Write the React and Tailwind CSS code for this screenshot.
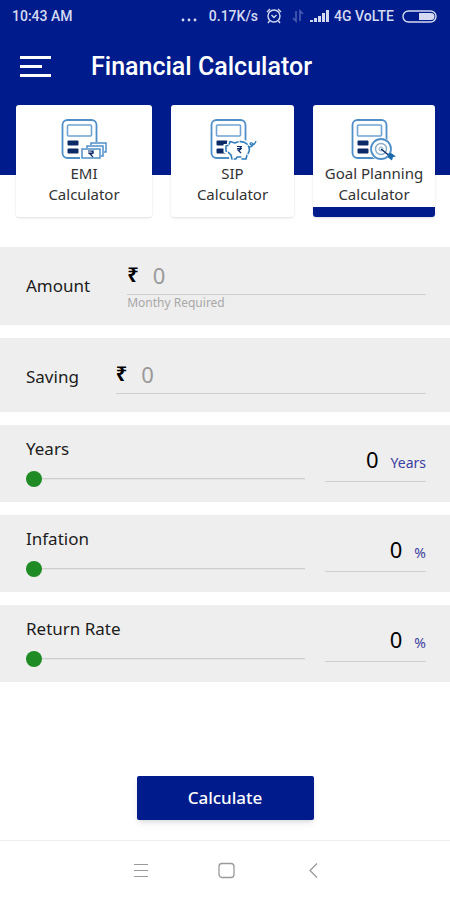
import { useState } from 'react';

const tabs = [
  { id: 'emi', title: 'EMI', Icon: EmiIcon, width: 'flex-[136]' },
  { id: 'sip', title: 'SIP', Icon: SipIcon, width: 'flex-[123]' },
  { id: 'goal', title: 'Goal Planning', Icon: GoalIcon, width: 'flex-[122]' },
];

const sliders = [
  { id: 'years', label: 'Years', unit: 'Years', max: 40 },
  { id: 'inflation', label: 'Infation', unit: '%', max: 30 },
  { id: 'return', label: 'Return Rate', unit: '%', max: 30 },
];

function CalculatorBody() {
  return (
    <>
      <rect x="2.5" y="3" width="34" height="38" rx="5" stroke="#4f8fc8" strokeWidth="1.8" />
      <rect x="7.5" y="8" width="24" height="11" rx="1" stroke="#6fa3d3" strokeWidth="1.6" />
      <rect x="7.5" y="23.5" width="11" height="5" rx="1" fill="#0b2a66" />
      <rect x="7.5" y="31.5" width="11" height="5" rx="1" fill="#0b2a66" />
    </>
  );
}

function EmiIcon() {
  return (
    <svg className="h-11 w-12" viewBox="0 0 48 44" fill="none" aria-hidden="true">
      <CalculatorBody />
      <path d="M20 30h6v-5h22v19H20z" fill="#fff" />
      <g stroke="#4f8fc8" strokeWidth="1.5">
        <path d="M31 28v-2h15v9h-2" />
        <path d="M27 31v-2h16v10h-2" />
        <rect x="22" y="32" width="18" height="9" />
      </g>
      <path d="M28 34h6M28 36h6M30 34c4 0 4 3 0 3l3 3" stroke="#0b2a66" strokeWidth="1.1" />
    </svg>
  );
}

function SipIcon() {
  return (
    <svg className="h-11 w-12" viewBox="0 0 48 44" fill="none" aria-hidden="true">
      <CalculatorBody />
      <path
        d="M21 24.500l5 1.500c4-2 9-2 12 1 3 3 3 8 0 11l-1 4h-4l-1-2h-4l-1 2h-4l-1-4-3-3-2-1v-5l3-1z"
        fill="#fff"
        stroke="#fff"
        strokeWidth="5"
      />
      <path
        d="M21 24.500l5 1.500c4-2 9-2 12 1 3 3 3 8 0 11l-1 4h-4l-1-2h-4l-1 2h-4l-1-4-3-3-2-1v-5l3-1z"
        stroke="#2f7dbb"
        strokeWidth="1.6"
        strokeLinejoin="round"
        strokeDasharray="9 1"
      />
      <path d="M40 30c4 0 5-3 3-4s-3 2 0 2 3-2 4-4" stroke="#2f7dbb" strokeWidth="1.3" />
      <path d="M28 29.500h5M28 31.500h5M29 29.500c4 0 4 3.500 0 3.500l3 3" stroke="#0b2a66" strokeWidth="1.2" />
    </svg>
  );
}

function GoalIcon() {
  return (
    <svg className="h-11 w-12" viewBox="0 0 48 44" fill="none" aria-hidden="true">
      <CalculatorBody />
      <circle cx="31" cy="32" r="11.500" fill="#fff" />
      <circle cx="31" cy="32" r="10" stroke="#4f8fc8" strokeWidth="1.8" />
      <circle cx="31" cy="32" r="5.500" stroke="#86abc9" strokeWidth="1.4" />
      <circle cx="31" cy="32" r="2" stroke="#86abc9" />
      <path d="M31 32l10 8" stroke="#0b2a66" strokeWidth="1.5" />
      <path d="M38 37l3-1 5 3.500-3 .5-1 3.500-4-3z" fill="#1769aa" />
    </svg>
  );
}

function StatusBar() {
  return (
    <div className="flex h-8 items-center justify-between px-3 font-['Roboto',sans-serif] text-sm font-medium text-[#d5daf3]">
      <span>10:43 AM</span>
      <div className="flex items-center gap-1">
        <svg className="mr-2 h-4 w-4" viewBox="0 0 16 16" fill="currentColor" aria-hidden="true">
          <circle cx="2" cy="12" r="1.4" />
          <circle cx="8" cy="12" r="1.4" />
          <circle cx="14" cy="12" r="1.4" />
        </svg>
        <span>0.17K/s</span>
        <svg className="ml-1 h-4 w-4" viewBox="0 0 16 16" fill="none" stroke="currentColor" strokeWidth="1.4" aria-hidden="true">
          <circle cx="8" cy="8" r="6" />
          <path d="M5.500 7L8 9.500 10.500 7M1 4l3-3M15 4l-3-3M3.500 13L2 15M12.500 13l1.500 2" />
        </svg>
        <svg className="ml-1 h-4 w-4" viewBox="0 0 16 16" fill="none" stroke="#4a5cb5" strokeWidth="1.6" aria-hidden="true">
          <path d="M6 3v10L3 10M10 13V3l3 3" />
        </svg>
        <svg className="h-4 w-5" viewBox="0 0 20 16" fill="currentColor" aria-hidden="true">
          <path d="M0 12h3v2H0zM4 10h3v4H4zM8 8h3v6H8zM12 5h3v9h-3zM16 2h3v12h-3z" />
        </svg>
        <span>4G VoLTE</span>
        <svg className="ml-1 h-4 w-9" viewBox="0 0 36 16" aria-hidden="true">
          <rect x="1" y="3" width="33" height="11" rx="5.500" fill="none" stroke="currentColor" strokeWidth="1.4" />
          <path d="M17 5h12a3.500 3.500 0 0 1 0 7H17z" fill="currentColor" />
        </svg>
      </div>
    </div>
  );
}

function AmountRow({ id, label, hint, value, onChange }) {
  return (
    <div className={`flex items-center bg-[#eeeeee] pr-6 pl-[26px] ${hint ? 'py-3.5' : 'pt-[22px] pb-[18px]'}`}>
      <label htmlFor={id} className="mr-[37px] text-[17px] leading-6">{label}</label>
      <div className="min-w-0 flex-1">
        <div className="flex h-[34px] items-start gap-3.5 border-b border-[#cfcfcf]">
          <span className="text-xl leading-7 font-bold text-black">₹</span>
          <input
            id={id}
            value={value}
            onChange={onChange}
            placeholder="0"
            inputMode="numeric"
            className="h-7 w-full min-w-0 bg-transparent text-[22px] leading-7 outline-none placeholder:text-[#999999]"
          />
        </div>
        {hint && <p className="text-xs leading-4 text-[#a8a8a8]">{hint}</p>}
      </div>
    </div>
  );
}

function SliderRow({ id, label, unit, max, value, onChange }) {
  return (
    <div className="flex h-[77px] gap-5 bg-[#eeeeee] pt-3 pr-6 pl-[26px]">
      <div className="min-w-0 flex-1">
        <label htmlFor={id} className="block text-[17px] leading-6">{label}</label>
        <input
          id={id}
          type="range"
          min="0"
          max={max}
          value={value}
          onChange={onChange}
          className="mt-2.5 block h-4 w-full appearance-none bg-linear-to-b from-transparent from-[44%] via-[#c4c4c4] via-[44%] to-transparent to-[56%] [&::-webkit-slider-thumb]:size-4 [&::-webkit-slider-thumb]:appearance-none [&::-webkit-slider-thumb]:rounded-full [&::-webkit-slider-thumb]:bg-[#1f8b24]"
        />
      </div>
      <div className="flex h-[45px] w-[101px] items-baseline justify-end gap-3 border-b border-[#cfcfcf] pt-1.5">
        <output htmlFor={id} className="text-[22px] leading-8 text-black">{value}</output>
        <span className="text-sm text-[#3c3f9f]">{unit}</span>
      </div>
    </div>
  );
}

export default function App() {
  const [active, setActive] = useState('goal');
  const [amount, setAmount] = useState('');
  const [saving, setSaving] = useState('');
  const [values, setValues] = useState({ years: 0, inflation: 0, return: 0 });

  return (
    <div className="flex min-h-screen flex-col bg-white font-['Noto_Sans',sans-serif] text-[#1c1c1c]">
      <header className="bg-[#001c8c] pb-[73px]">
        <StatusBar />
        <div className="flex h-[70px] items-center gap-[39px] pl-5">
          <button type="button" aria-label="Menu" className="text-white">
            <svg className="h-6 w-8" viewBox="0 0 32 24" stroke="currentColor" strokeWidth="3" aria-hidden="true">
              <path d="M0 2.500h31M0 11.500h22M0 20.500h31" />
            </svg>
          </button>
          <h1 className="font-['Roboto',sans-serif] text-[25px] leading-8 font-medium text-white">Financial Calculator</h1>
        </div>
      </header>

      <nav className="-mt-[70px] flex gap-[19px] pr-[15px] pl-4">
        {tabs.map(({ id, title, Icon, width }) => (
          <button
            key={id}
            type="button"
            aria-pressed={active === id}
            onClick={() => setActive(id)}
            className={`${width} flex h-28 min-w-0 flex-col items-center rounded-[3px] border-b-10 bg-white pt-3 text-[15px] leading-[21px] whitespace-nowrap text-[#333333] shadow ${
              active === id ? 'border-[#001c8c]' : 'border-white'
            }`}
          >
            <Icon />
            <span className="mt-0.5">{title}</span>
            <span>Calculator</span>
          </button>
        ))}
      </nav>

      <form className="flex flex-1 flex-col" onSubmit={e => e.preventDefault()}>
        <div className="mt-[30px] flex flex-col gap-[13px]">
          <AmountRow
            id="amount"
            label="Amount"
            hint="Monthy Required"
            value={amount}
            onChange={e => setAmount(e.target.value)}
          />
          <AmountRow id="saving" label="Saving" value={saving} onChange={e => setSaving(e.target.value)} />
          {sliders.map(s => (
            <SliderRow
              key={s.id}
              {...s}
              value={values[s.id]}
              onChange={e => setValues({ ...values, [s.id]: Number(e.target.value) })}
            />
          ))}
        </div>
        <button
          type="submit"
          className="mx-auto mt-auto mb-5 h-11 w-[177px] rounded-[2px] bg-[#001c8c] text-[17px] font-medium text-white shadow-md"
        >
          Calculate
        </button>
      </form>

      <footer className="flex h-[60px] items-center justify-center gap-[62px] border-t border-[#eeeeee] pl-1 text-[#9a9a9a]">
        <button type="button" aria-label="Recent apps">
          <svg className="size-6" viewBox="0 0 24 24" stroke="currentColor" aria-hidden="true">
            <path d="M5 5.500h14M5 11.500h14M5 17.500h14" />
          </svg>
        </button>
        <button type="button" aria-label="Home">
          <svg className="size-6" viewBox="0 0 24 24" fill="none" stroke="currentColor" strokeWidth="1.300" aria-hidden="true">
            <rect x="4" y="4.500" width="15" height="14" rx="3" />
          </svg>
        </button>
        <button type="button" aria-label="Back">
          <svg className="size-6" viewBox="0 0 24 24" fill="none" stroke="currentColor" strokeWidth="1.300" aria-hidden="true">
            <path d="M16 4.500l-7 7 7 7" />
          </svg>
        </button>
      </footer>
    </div>
  );
}
